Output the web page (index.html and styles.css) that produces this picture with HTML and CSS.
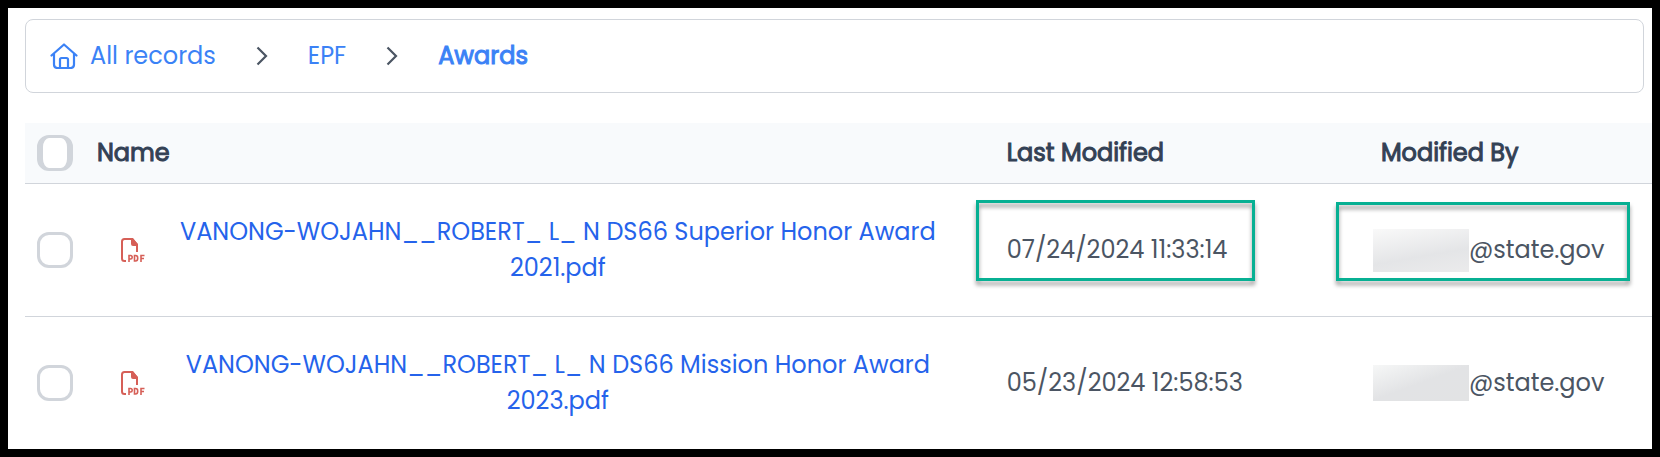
FILE: index.html
```html
<!DOCTYPE html>
<html lang="en">

<head>
  <meta charset="UTF-8" />
  <meta name="viewport" content="width=device-width, initial-scale=1.0" />
  <title>Awards</title>
  <link rel="stylesheet" href="styles.css">
</head>

<body>
  <svg class="sprite" aria-hidden="true">
    <symbol id="icon-chevron" viewBox="0 0 12 20">
      <path d="M1.500 1.500l8.500 8.500-8.500 8.500" fill="none" stroke="currentColor" stroke-width="2.200" />
    </symbol>
    <symbol id="icon-pdf" viewBox="0 0 24 24">
      <path d="M5 23H3.500Q1 23 1 20.500V3.500Q1 1 3.500 1H11L16 6.500V14" fill="none" stroke="currentColor" stroke-width="2" />
      <path d="M10 0H12L17 6.500V8H12Q10 8 10 6Z" fill="currentColor" />
      <path d="M8 24V17.500H9.500Q11.200 17.500 11.200 19.200T9.500 21H8M13.500 17.500V23H14.500Q16.700 23 16.700 20.200T14.500 17.500ZM20 24V17.500H23.500M20 20.500H23" fill="none" stroke="currentColor" stroke-width="1.600" />
    </symbol>
  </svg>

  <main class="page">
    <nav class="breadcrumb" aria-label="Breadcrumb">
      <a href="#" class="crumb">
        <svg class="home-icon" viewBox="0 0 28 26" fill="none" stroke="currentColor" stroke-width="2.200" stroke-linecap="round" stroke-linejoin="round" aria-hidden="true">
          <path d="M1.500 12.500L14 1.500l12.500 11M4 11v10.500Q4 25 7.500 25h13q3.500 0 3.500-3.500V11M10 25v-8.500Q10 15 11.500 15h5q1.500 0 1.500 1.500V25" />
        </svg>
        All records
      </a>
      <svg class="chevron" aria-hidden="true"><use href="#icon-chevron" /></svg>
      <a href="#" class="crumb">EPF</a>
      <svg class="chevron" aria-hidden="true"><use href="#icon-chevron" /></svg>
      <a href="#" class="crumb current" aria-current="page">Awards</a>
    </nav>

    <table class="records">
      <colgroup>
        <col class="col-check">
        <col>
        <col class="col-date">
        <col class="col-user">
      </colgroup>
      <thead>
        <tr>
          <th class="check-cell"><input type="checkbox" class="checkbox check-all" aria-label="Select all records"></th>
          <th>Name</th>
          <th>Last Modified</th>
          <th>Modified By</th>
        </tr>
      </thead>
      <tbody>
        <tr>
          <td class="check-cell"><input type="checkbox" class="checkbox" aria-label="Select Superior Honor Award 2021"></td>
          <td>
            <div class="file">
              <svg class="pdf-icon" aria-hidden="true"><use href="#icon-pdf" /></svg>
              <a href="#" class="file-link">VANONG-WOJAHN__ROBERT_ L_ N DS66 Superior Honor Award 2021.pdf</a>
            </div>
          </td>
          <td class="marked">07/24/2024 11:33:14</td>
          <td class="marked marked-user">
            <div class="user"><span class="redacted redacted-tall"></span>@state.gov</div>
          </td>
        </tr>
        <tr>
          <td class="check-cell"><input type="checkbox" class="checkbox" aria-label="Select Mission Honor Award 2023"></td>
          <td>
            <div class="file">
              <svg class="pdf-icon" aria-hidden="true"><use href="#icon-pdf" /></svg>
              <a href="#" class="file-link">VANONG-WOJAHN__ROBERT_ L_ N DS66 Mission Honor Award 2023.pdf</a>
            </div>
          </td>
          <td>05/23/2024 12:58:53</td>
          <td>
            <div class="user"><span class="redacted"></span>@state.gov</div>
          </td>
        </tr>
      </tbody>
    </table>
  </main>
</body>

</html>
```

FILE: styles.css
```css
:root {
  --link: #2563eb;
  --crumb: #3b82f6;
  --heading: #334155;
  --text: #4b5563;
  --border: #d1d5db;
  --header-bg: #f8fafc;
  --highlight: #07b093;
  --pdf: #d65f57;
}

*,
*::after {
  box-sizing: border-box;
}

body {
  margin: 0;
  min-height: 100vh;
  border: 8px solid #000;
  background: #fff;
  color: var(--text);
  font-family: Poppins, Inter, sans-serif;
  font-size: 24px;
  line-height: 36px;
}

.sprite {
  display: none;
}

.page {
  padding: 11px 0 0 17px;
}

a {
  text-decoration: none;
}

.breadcrumb {
  display: flex;
  align-items: center;
  gap: 40px;
  margin: 0 8px 30px 0;
  padding: 18px 24px;
  border: 1px solid var(--border);
  border-radius: 8px;
}

.crumb {
  display: flex;
  align-items: center;
  gap: 12px;
  color: var(--crumb);
}

.current {
  -webkit-text-stroke: 1px;
}

.home-icon {
  width: 28px;
  height: 26px;
}

.chevron {
  width: 12px;
  height: 20px;
}

.records {
  width: 100%;
  table-layout: fixed;
  border-collapse: separate;
  border-spacing: 0;
}

.col-check {
  width: 60px;
}

.col-date {
  width: 23%;
}

.col-user {
  width: 17.4%;
}

.records th {
  padding: 12px;
  background: var(--header-bg);
  border-bottom: 1px solid var(--border);
  color: var(--heading);
  font-weight: 400;
  -webkit-text-stroke: 1px;
  text-align: left;
}

.records td {
  padding: 30px 12px;
  border-bottom: 1px solid var(--border);
}

.records tr:last-child td {
  border-bottom: none;
}

.records .check-cell {
  padding-right: 0;
}

.checkbox {
  appearance: none;
  display: block;
  width: 36px;
  height: 36px;
  margin: 0;
  background: #fff;
  border: 3px solid var(--border);
  border-radius: 12px;
}

.check-all {
  border-width: 3px 6px;
}

.file {
  display: flex;
  align-items: center;
  gap: 12px;
  padding: 0 24px;
}

.pdf-icon {
  flex: none;
  width: 24px;
  height: 24px;
  color: var(--pdf);
}

.file-link {
  flex: 1;
  color: var(--link);
  text-align: center;
}

/* callout frame over a cell */
.marked {
  position: relative;
}

.marked::after {
  content: "";
  position: absolute;
  top: 16px;
  left: -19px;
  width: 279px;
  height: 81px;
  border: 3px solid var(--highlight);
  filter: drop-shadow(0 4px 2px rgba(0, 0, 0, 0.4));
}

.marked-user::after {
  top: 18px;
  left: -33px;
  width: 294px;
  height: 79px;
}

.user {
  display: flex;
  align-items: center;
  margin-left: -8px;
}

.redacted {
  width: 96px;
  height: 36px;
  background: linear-gradient(160deg, #f6f7f7, #e2e3e5 50%, #e2e3e4);
}

.redacted-tall {
  height: 43px;
  background: linear-gradient(170deg, #f9f9f9, #e4e5e7 60%, #ebebec);
}
```
